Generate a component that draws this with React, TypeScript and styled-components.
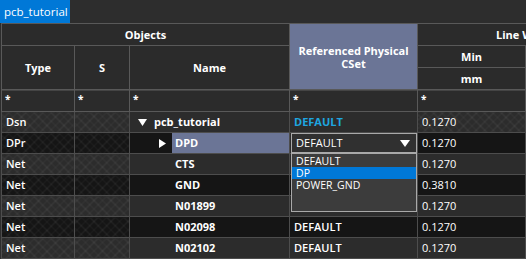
import React from 'react';
import styled, { createGlobalStyle, css } from 'styled-components';

type RowData = {
  type: string;
  name: string;
  level: number;
  expander?: 'open' | 'closed';
  selected?: boolean;
  cset: string;
  csetKind?: 'default' | 'combo' | 'plain' | 'empty';
  width: string;
  widthPattern?: boolean;
};

const rows: RowData[] = [
  { type: 'Dsn', name: 'pcb_tutorial', level: 0, expander: 'open', cset: 'DEFAULT', csetKind: 'default', width: '0.1270', widthPattern: true },
  { type: 'DPr', name: 'DPD', level: 1, expander: 'closed', selected: true, cset: 'DEFAULT', csetKind: 'combo', width: '0.1270' },
  { type: 'Net', name: 'CTS', level: 1, cset: '', csetKind: 'empty', width: '0.1270' },
  { type: 'Net', name: 'GND', level: 1, cset: '', csetKind: 'empty', width: '0.3810' },
  { type: 'Net', name: 'N01899', level: 1, cset: '', csetKind: 'empty', width: '0.1270' },
  { type: 'Net', name: 'N02098', level: 1, cset: 'DEFAULT', csetKind: 'plain', width: '0.1270' },
  { type: 'Net', name: 'N02102', level: 1, cset: 'DEFAULT', csetKind: 'plain', width: '0.1270' },
];

const csetOptions = ['DEFAULT', 'DP', 'POWER_GND'];

const App: React.FC = () => {
  return (
    <Page>
      <GlobalStyle />
      <TabBar>
        <Tab>pcb_tutorial</Tab>
      </TabBar>
      <GridWrap>
        <Table>
          <colgroup>
            <col style={{ width: 73 }} />
            <col style={{ width: 55 }} />
            <col style={{ width: 160 }} />
            <col style={{ width: 128 }} />
            <col style={{ width: 108 }} />
            <col style={{ width: 108 }} />
          </colgroup>
          <thead>
            <HeadRow>
              <HeadCell colSpan={3}>Objects</HeadCell>
              <HeadCell rowSpan={3} $accent>
                Referenced Physical
                <br />
                CSet
              </HeadCell>
              <HeadCell colSpan={2}>Line Width</HeadCell>
            </HeadRow>
            <HeadRow>
              <HeadCell rowSpan={2}>Type</HeadCell>
              <HeadCell rowSpan={2}>S</HeadCell>
              <HeadCell rowSpan={2}>Name</HeadCell>
              <HeadCell>Min</HeadCell>
              <HeadCell>Max</HeadCell>
            </HeadRow>
            <HeadRow>
              <HeadCell>mm</HeadCell>
              <HeadCell>mm</HeadCell>
            </HeadRow>
          </thead>
          <tbody>
            <FilterRow>
              {Array.from({ length: 6 }).map((_, i) => (
                <FilterCell key={i}>*</FilterCell>
              ))}
            </FilterRow>
            {rows.map((r, i) => (
              <Row key={r.name} $dark={i % 2 === 1}>
                <Cell $pattern>{r.type}</Cell>
                <Cell $pattern />
                <NameCell>
                  <NameInner $level={r.level}>
                    <Toggle>
                      {r.expander === 'open' && (
                        <svg width="9" height="7" viewBox="0 0 9 7">
                          <polygon points="0,0 9,0 4.5,7" fill="#fff" />
                        </svg>
                      )}
                      {r.expander === 'closed' && (
                        <svg width="7" height="9" viewBox="0 0 7 9">
                          <polygon points="0,0 7,4.5 0,9" fill="#fff" />
                        </svg>
                      )}
                    </Toggle>
                    <Label $selected={r.selected}>{r.name}</Label>
                  </NameInner>
                </NameCell>
                {r.csetKind === 'combo' ? (
                  <ComboCell>
                    <Combo>
                      <span>{r.cset}</span>
                      <svg width="10" height="7" viewBox="0 0 10 7">
                        <polygon points="0,0 10,0 5,7" fill="#fff" />
                      </svg>
                    </Combo>
                    <DropList>
                      {csetOptions.map((o) => (
                        <DropItem key={o} $selected={o === 'DP'}>
                          {o}
                        </DropItem>
                      ))}
                    </DropList>
                  </ComboCell>
                ) : (
                  <Cell $highlight={r.csetKind === 'default'}>{r.cset}</Cell>
                )}
                <Cell $pattern={r.widthPattern} $light>
                  {r.width}
                </Cell>
                <Cell $pattern={r.widthPattern} $light>
                  {r.width}
                </Cell>
              </Row>
            ))}
          </tbody>
        </Table>
      </GridWrap>
    </Page>
  );
};

export default App;

const GlobalStyle = createGlobalStyle`
  html, body {
    margin: 0;
    padding: 0;
    background: #2d2d2d;
  }
  body {
    font-family: "Open Sans", "Noto Sans", sans-serif;
    color: #fff;
  }
`;

const Page = styled.div`
  width: 526px;
  height: 259px;
  overflow: hidden;
  background: #2d2d2d;
`;

const TabBar = styled.div`
  display: flex;
  height: 23px;
`;

const Tab = styled.div`
  display: flex;
  align-items: center;
  width: 70px;
  padding-left: 4px;
  box-sizing: border-box;
  background: #0078d7;
  font-size: 11.5px;
  color: #fff;
  white-space: nowrap;
`;

const GridWrap = styled.div`
  padding-left: 1px;
`;

const Table = styled.table`
  border-collapse: collapse;
  table-layout: fixed;
  width: 632px;
  font-size: 11px;
  line-height: 14px;
`;

const HeadRow = styled.tr`
  height: 22px;
`;

const HeadCell = styled.th<{ $accent?: boolean }>`
  padding: 0 2px;
  border: 1px solid #595959;
  background: ${(p) => (p.$accent ? '#6b7596' : '#2b2b2b')};
  font-weight: 700;
  line-height: 13px;
  text-align: center;
  vertical-align: middle;
  white-space: nowrap;
`;

const FilterRow = styled.tr`
  height: 22px;
`;

const FilterCell = styled.td`
  padding: 2px 3px 0;
  border: 1px solid #595959;
  box-shadow: inset 0 1px 0 #444;
  background: #2b2b2b;
  font-weight: 700;
  font-size: 10px;
  vertical-align: top;
`;

const Row = styled.tr<{ $dark: boolean }>`
  height: 21px;
  background: ${(p) => (p.$dark ? '#151515' : '#2c2c2c')};
`;

const patternBg = css`
  background-image: repeating-linear-gradient(
      45deg,
      rgba(255, 255, 255, 0.05) 0 1px,
      transparent 1px 6px
    ),
    repeating-linear-gradient(
      -45deg,
      rgba(255, 255, 255, 0.05) 0 1px,
      transparent 1px 6px
    );
`;

const Cell = styled.td<{ $pattern?: boolean; $highlight?: boolean; $light?: boolean }>`
  padding: 0 4px;
  border: 1px solid #4d4d4d;
  font-weight: ${(p) => (p.$light ? 400 : 600)};
  color: ${(p) => (p.$highlight ? '#1ea6e0' : '#fff')};
  ${(p) => p.$highlight && 'font-weight: 700;'}
  white-space: nowrap;
  overflow: hidden;
  vertical-align: middle;
  ${(p) => p.$pattern && patternBg}
`;

const NameCell = styled.td`
  padding: 0;
  border: 1px solid #4d4d4d;
  font-weight: 700;
`;

const NameInner = styled.div<{ $level: number }>`
  display: flex;
  align-items: stretch;
  height: 20px;
  padding-left: ${(p) => 8 + p.$level * 21}px;
`;

const Toggle = styled.span`
  display: flex;
  align-items: center;
  width: 13px;
  flex: none;
`;

const Label = styled.span<{ $selected?: boolean }>`
  display: flex;
  align-items: center;
  flex: 1;
  padding-left: 3px;
  background: ${(p) => (p.$selected ? '#6b7596' : 'transparent')};
`;

const ComboCell = styled.td`
  position: relative;
  padding: 0;
  border: 1px solid #4d4d4d;
  background: #2c2c2c;
`;

const Combo = styled.div`
  display: flex;
  align-items: center;
  justify-content: space-between;
  box-sizing: border-box;
  height: 20px;
  margin-left: 1px;
  padding: 0 6px 0 4px;
  border: 1px solid #a9a9a9;
  background: #303030;
  font-weight: 400;
`;

const DropList = styled.div`
  position: absolute;
  top: 20px;
  left: 1px;
  right: 0;
  z-index: 2;
  box-sizing: border-box;
  height: 59px;
  padding-top: 1px;
  border: 1px solid #a9a9a9;
  background: #3c3c3c;
`;

const DropItem = styled.div<{ $selected?: boolean }>`
  height: 12px;
  line-height: 12px;
  font-size: 10.5px;
  padding-left: 4px;
  font-weight: 400;
  background: ${(p) => (p.$selected ? '#0078d7' : 'transparent')};
`;
